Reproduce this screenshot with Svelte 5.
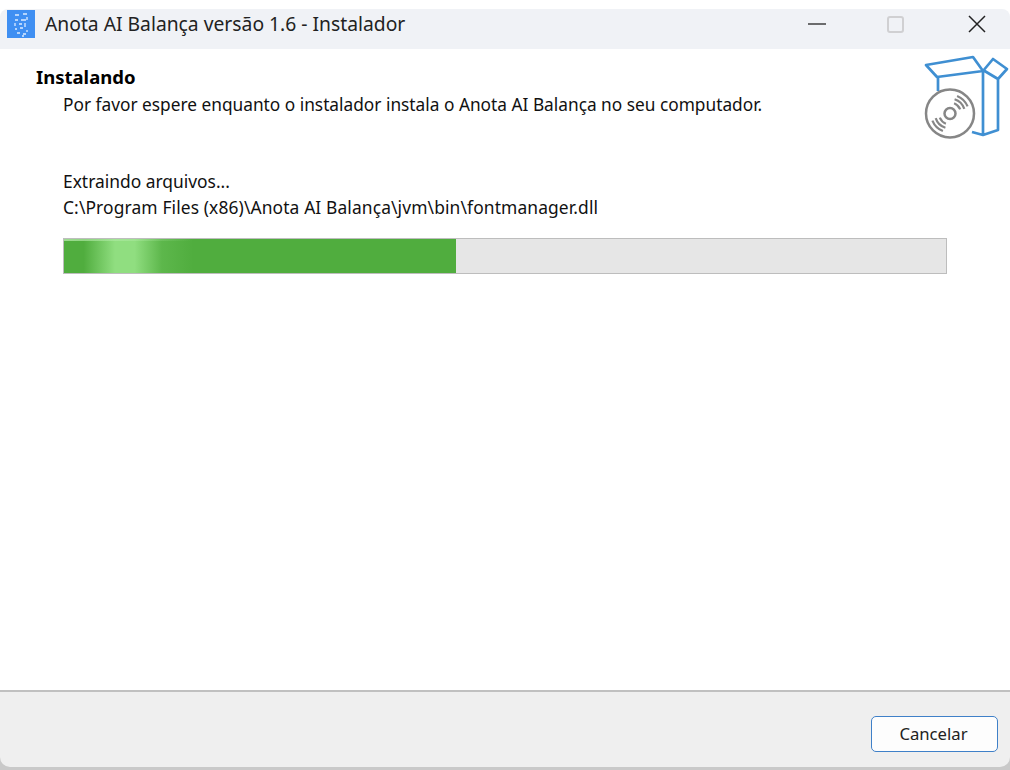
<script lang="ts">
  let progress = 44.4;

  // cd grooves: two opposite fans of short arcs round the disc centre
  const cx = 950;
  const cy = 113.5;
  function arc(r: number, from: number, to: number) {
    const p = (a: number) => {
      const t = (a * Math.PI) / 180;
      return `${(cx + r * Math.cos(t)).toFixed(1)} ${(cy + r * Math.sin(t)).toFixed(1)}`;
    };
    return `M${p(from)}A${r} ${r} 0 0 1 ${p(to)}`;
  }
  const arcs = [
    arc(11, -68, -22),
    arc(15, -72, -18),
    arc(19, -68, -22),
    arc(11, 112, 158),
    arc(15, 108, 162),
    arc(19, 112, 158)
  ];
</script>

<div class="window">
  <header class="titlebar">
    <div class="title-left">
      <svg class="app-icon" viewBox="0 0 28 28" width="28" height="28" aria-hidden="true">
        <rect width="28" height="28" fill="#3f8ff2" />
        <path d="M8 5h4M16 4h4M20 7v3M8 10h3M14 10h5M8 13v3M12 14h3M18 13v4M8 19h2M13 18h3M20 20v2M10 23h3M16 24h3M15 26h2" stroke="#dcebff" stroke-width="1.300" fill="none" />
      </svg>
      <span class="title">Anota AI Balança versão 1.6 - Instalador</span>
    </div>
    <div class="controls">
      <svg class="min" viewBox="0 0 18 2" width="18" height="2" aria-hidden="true"><path d="M0 1h18" stroke="#222" stroke-width="1.300" /></svg>
      <span class="max"></span>
      <svg class="close" viewBox="0 0 18 18" width="18" height="18" aria-hidden="true"><path d="M1 1l16 16M17 1L1 17" stroke="#222" stroke-width="1.500" /></svg>
    </div>
  </header>

  <main class="body">
    <section class="head">
      <div class="head-text">
        <h1>Instalando</h1>
        <p>Por favor espere enquanto o instalador instala o Anota AI Balança no seu computador.</p>
      </div>
      <svg class="box-icon" viewBox="920 50 90 90" width="90" height="90" aria-hidden="true">
        <g fill="none" stroke="#3f8fd2" stroke-width="2.700" stroke-linejoin="round">
          <path d="M926 65l47-8 10 14-46 6zM938 77v14" />
          <path d="M983 71v64M983 71l10-12 14 10-9 10-15-9M998 79v51l-15 5-11-3" />
        </g>
        <circle {cx} {cy} r="24" fill="#fff" stroke="#868686" stroke-width="2.500" />
        <circle {cx} {cy} r="5.500" fill="none" stroke="#868686" stroke-width="2.500" />
        <g fill="none" stroke="#868686" stroke-width="2.200">
          {#each arcs as d}
            <path {d} />
          {/each}
        </g>
      </svg>
    </section>

    <section class="status">
      <p>Extraindo arquivos...</p>
      <p class="path">C:\Program Files (x86)\Anota AI Balança\jvm\bin\fontmanager.dll</p>
      <div class="track">
        <div class="fill" style="width: {progress}%"></div>
      </div>
    </section>
  </main>

  <footer class="footer">
    <button type="button" class="cancel">Cancelar</button>
  </footer>
</div>

<style>
  :global(body) {
    background: #fff;
  }

  .window {
    height: 770px;
    box-sizing: border-box;
    padding-top: 9px;
    display: flex;
    flex-direction: column;
    overflow: hidden;
    font-family: "Noto Sans", "Open Sans", sans-serif;
    color: #111;
    background: linear-gradient(#fff 0 700px, #c9c9c9 760px);
  }

  .titlebar {
    height: 40px;
    flex: none;
    display: flex;
    justify-content: space-between;
    align-items: center;
    background: #f0f2f6;
    border-radius: 8px 8px 0 0;
  }

  .title-left {
    display: flex;
    align-items: center;
    gap: 10px;
    padding-left: 7px;
    margin-top: -10px;
    height: 28px;
  }

  .app-icon {
    display: block;
  }

  .title {
    font-size: 19.300px;
    line-height: 28px;
    color: #222;
  }

  .controls {
    display: flex;
    align-items: center;
    margin-top: -10px;
    padding-right: 24px;
  }

  .min {
    margin-right: 61px;
  }

  .max {
    width: 17px;
    height: 17px;
    box-sizing: border-box;
    border: 2px solid #d0d0d2;
    border-radius: 3px;
    margin-right: 64px;
  }

  .body {
    flex: 1;
    background: #fff;
    min-height: 0;
  }

  .head {
    display: flex;
    justify-content: space-between;
    height: 91px;
  }

  .head-text {
    padding: 16px 0 0 36px;
  }

  h1 {
    margin: 0;
    font-size: 18.500px;
    line-height: 24px;
    font-weight: 700;
    color: #000;
  }

  .head-text p {
    margin: 4px 0 0 27px;
    font-size: 17.300px;
    line-height: 24px;
  }

  .box-icon {
    display: block;
    margin-top: 1px;
    flex: none;
  }

  .status {
    padding: 28px 63px 0;
  }

  .status p {
    margin: 0;
    font-size: 17.400px;
    line-height: 26px;
  }

  .status .path {
    letter-spacing: 0.12px;
  }

  .track {
    height: 36px;
    box-sizing: border-box;
    margin-top: 18px;
    border: 1px solid #bdbdbd;
    background: #e6e6e6;
  }

  .fill {
    height: 100%;
    background:
      linear-gradient(90deg, rgba(190, 240, 180, 0.7), rgba(190, 240, 180, 0) 33%) top / 100% 2px no-repeat,
      linear-gradient(90deg, rgba(144, 222, 128, 0) 5%, #90de80 13%, #90de80 18%, rgba(144, 222, 128, 0.2) 25%, rgba(144, 222, 128, 0) 33%),
      #50ad3e;
  }

  .footer {
    flex: none;
    height: 77px;
    box-sizing: border-box;
    margin-bottom: 3px;
    border-top: 2px solid #c0c0c0;
    background: #efefef;
    border-radius: 0 0 10px 10px;
    display: flex;
    justify-content: flex-end;
    padding: 24px 12px 0 0;
  }

  .cancel {
    width: 127px;
    height: 36px;
    box-sizing: border-box;
    border: 1px solid #3f80c8;
    border-radius: 5px;
    background: #fdfdfd;
    font: inherit;
    font-size: 16.700px;
    color: #222;
    padding: 0 2px 2px 0;
  }
</style>
